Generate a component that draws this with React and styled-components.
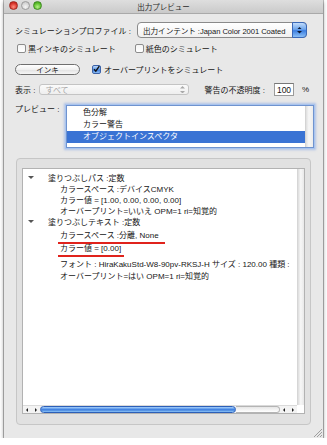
import React from 'react';
import styled, { createGlobalStyle } from 'styled-components';

const GlobalStyle = createGlobalStyle`
  html, body { margin: 0; padding: 0; background: #fff; }
  body {
    font-family: "Liberation Sans", "Noto Sans CJK JP", sans-serif;
    font-size: 8px;
    color: #161616;
  }
`;

const Window = styled.div`
  position: relative;
  margin-left: 4px;
  width: 319px;
  height: 438px;
  background: #e8e8e8;
  box-shadow: 0 0 0 1px rgba(0, 0, 0, 0.25), 0 2px 4px rgba(0, 0, 0, 0.45);
  display: flex;
  flex-direction: column;
`;

const TitleBar = styled.div`
  position: relative;
  height: 13px;
  background: linear-gradient(#dedede, #cacaca);
  border-bottom: 1px solid #a9a9a9;
  display: flex;
  align-items: center;
  justify-content: center;
`;

const Lights = styled.div`
  position: absolute;
  left: 5px;
  top: 1px;
  display: flex;
  gap: 3px;
`;

const Light = styled.span`
  width: 9px;
  height: 9px;
  border-radius: 50%;
  border: 1px solid ${({ c }) => (c === 'red' ? '#a12a22' : c === 'green' ? '#3f8a22' : '#9c9c9c')};
  box-sizing: border-box;
  background: ${({ c }) =>
    c === 'red'
      ? 'radial-gradient(circle at 50% 70%, #ff8f80, #d8342a 60%, #b81d14)'
      : c === 'green'
      ? 'radial-gradient(circle at 50% 70%, #b8f08a, #5cbf2c 60%, #3d951b)'
      : 'radial-gradient(circle at 50% 70%, #f4f4f4, #d0d0d0 70%, #b8b8b8)'};
`;

const Title = styled.div`
  font-size: 7.5px;
  color: #2a2a2a;
`;

const Body = styled.div`
  flex: 1;
  display: flex;
  flex-direction: column;
  padding: 8px 9px 13px 11px;
`;

const Row = styled.div`
  display: flex;
  align-items: center;
  height: ${({ h }) => h || 10}px;
  margin-top: ${({ mt }) => mt || 0}px;
  padding-right: ${({ pr }) => pr || 0}px;
`;

const Label = styled.span`
  white-space: nowrap;
  margin-left: ${({ ml }) => ml || 0}px;
`;

const Popup = styled.div`
  display: flex;
  align-items: center;
  margin-left: auto;
  width: 170px;
  height: 16px;
  box-sizing: border-box;
  border: 1px solid #8a8a8a;
  border-radius: 4px;
  background: linear-gradient(#ffffff, #f1f1f1);
  padding-left: 5px;
`;

const PopupText = styled.span`
  flex: 1;
  white-space: nowrap;
  font-size: 7.6px;
  letter-spacing: -0.05px;
`;

const Stepper = styled.div`
  width: 15px;
  height: 16px;
  margin-right: -1px;
  border-radius: 0 4px 4px 0;
  border: 1px solid #3a68b8;
  box-sizing: border-box;
  background: linear-gradient(#c2dcfb, #6fa6ec 45%, #3d7fe0 55%, #8cc0f6);
  display: flex;
  align-items: center;
  justify-content: center;
`;

const Box = styled.span`
  display: inline-flex;
  align-items: center;
  justify-content: center;
  width: 9px;
  height: 9px;
  box-sizing: border-box;
  margin-left: ${({ ml }) => ml || 0}px;
  margin-right: 2px;
  border: 1px solid ${({ on }) => (on ? '#3b62a8' : '#8c8c8c')};
  border-radius: 2px;
  background: ${({ on }) =>
    on ? 'linear-gradient(#bcd8fa, #5c98e6 50%, #3a79dc 55%, #8fc0f5)' : 'linear-gradient(#f4f4f4, #ffffff)'};
`;

const PillButton = styled.div`
  width: 65px;
  height: 11px;
  box-sizing: border-box;
  border: 1px solid #6f6f6f;
  border-radius: 6px;
  background: linear-gradient(#ffffff, #f0f0f0 50%, #e2e2e2 55%, #f6f6f6);
  display: flex;
  align-items: center;
  justify-content: center;
  font-size: 7.5px;
  margin-right: 12px;
`;

const DimPopup = styled.div`
  display: flex;
  align-items: center;
  justify-content: space-between;
  width: 150px;
  height: 11px;
  box-sizing: border-box;
  margin-left: 4px;
  margin-right: 15px;
  border: 1px solid #c4c4c4;
  border-radius: 3px;
  background: linear-gradient(#fbfbfb, #eeeeee);
  padding: 0 3px 0 5px;
  color: #a3a3a3;
`;

const NumberField = styled.div`
  width: 20px;
  height: 13px;
  box-sizing: border-box;
  margin-left: 9px;
  margin-right: 8px;
  border: 1px solid #9a9a9a;
  border-top-color: #777;
  background: #fff;
  display: flex;
  align-items: center;
  padding-left: 2px;
  font-size: 8.5px;
`;

const PreviewRow = styled.div`
  display: flex;
  margin-top: 9px;
  height: 43px;
`;

const PreviewLabel = styled.span`
  line-height: 10px;
  white-space: nowrap;
  width: 51px;
`;

const ListBox = styled.div`
  width: 248px;
  height: 43px;
  box-sizing: border-box;
  border: 1px solid #6f93cf;
  box-shadow: 0 0 0 1px #a9c4ee, 0 0 2px 2px rgba(120, 160, 230, 0.5);
  background: #fff;
  display: flex;
`;

const ListItems = styled.div`
  flex: 1;
  padding-top: 1px;
`;

const ListItem = styled.div`
  height: 12px;
  line-height: 12px;
  padding-left: 16px;
  color: ${({ sel }) => (sel ? '#fff' : '#161616')};
  background: ${({ sel }) => (sel ? '#3a73d4' : 'transparent')};
`;

const VTrack = styled.div`
  width: 7px;
  background: linear-gradient(90deg, #dedede, #f6f6f6 40%, #ececec);
  border-left: 1px solid #d4d4d4;
`;

const Group = styled.div`
  margin-top: 10px;
  margin-left: 1px;
  width: 295px;
  height: 267px;
  box-sizing: border-box;
  border: 1px solid #c6c6c6;
  border-radius: 4px;
  background: #e1e1e1;
  padding: 9px 6px 10px 5px;
  display: flex;
`;

const Outline = styled.div`
  flex: 1;
  display: grid;
  grid-template-columns: 1fr 7px;
  grid-template-rows: 1fr 8px;
  border: 1px solid #b2b2b2;
  background: #fff;
`;

const OutlineRows = styled.div`
  padding-top: 3px;
  overflow: hidden;
`;

const OutlineRow = styled.div`
  display: flex;
  align-items: center;
  height: ${({ h }) => h || 11}px;
  margin-top: ${({ mt }) => mt || 0}px;
  padding-left: ${({ level }) => (level ? 37 : 5)}px;
  white-space: nowrap;
`;

const Disclosure = styled.span`
  width: 20px;
  display: inline-flex;
  align-items: center;
`;

const Marked = styled.span`
  margin-left: -2px;
  padding: 0 ${({ extra }) => extra || 2}px 1px 2px;
  line-height: 10px;
  border-bottom: 2px solid #e0231c;
`;

const VScroll = styled.div`
  background: linear-gradient(90deg, #dcdcdc, #f7f7f7 45%, #e8e8e8);
  border-left: 1px solid #d6d6d6;
`;

const HScroll = styled.div`
  display: flex;
  align-items: center;
  background: #f3f3f3;
  border-top: 1px solid #dadada;
`;

const Arrows = styled.div`
  width: ${({ w }) => w}px;
  display: flex;
  align-items: center;
  justify-content: space-around;
  height: 100%;
`;

const Thumb = styled.div`
  width: 196px;
  height: 7px;
  box-sizing: border-box;
  border: 1px solid #2c5fb8;
  border-radius: 4px;
  background: linear-gradient(#a8d0fa, #5896ea 40%, #3b7bdc 55%, #8ec6f7);
`;

const Track = styled.div`
  width: 44px;
  height: 7px;
  box-sizing: border-box;
  border: 1px solid #b4b4b4;
  border-left: none;
  border-radius: 0 4px 4px 0;
  background: linear-gradient(#e6e6e6, #ffffff);
`;

const Corner = styled.div`
  background: #fff;
`;

const Grip = styled.svg`
  position: absolute;
  right: 1px;
  bottom: 1px;
`;

const Tri = ({ dir, color = '#222', size = 3 }) => {
  const pts =
    dir === 'left'
      ? `${size},0 ${size},${size * 2} 0,${size}`
      : dir === 'right'
      ? `0,0 0,${size * 2} ${size},${size}`
      : dir === 'up'
      ? `0,${size} ${size * 2},${size} ${size},0`
      : `0,0 ${size * 2},0 ${size},${size}`;
  const w = dir === 'left' || dir === 'right' ? size : size * 2;
  const h = dir === 'left' || dir === 'right' ? size * 2 : size;
  return (
    <svg width={w} height={h} viewBox={`0 0 ${w} ${h}`}>
      <polygon points={pts} fill={color} />
    </svg>
  );
};

const Stack = styled.div`
  display: flex;
  flex-direction: column;
  gap: 2px;
`;

const UpDown = ({ color }) => (
  <Stack>
    <Tri dir="up" color={color} size={2.5} />
    <Tri dir="down" color={color} size={2.5} />
  </Stack>
);

export default function App() {
  return (
    <>
      <GlobalStyle />
      <Window>
        <TitleBar>
          <Lights>
            <Light c="red" />
            <Light c="grey" />
            <Light c="green" />
          </Lights>
          <Title>出力プレビュー</Title>
        </TitleBar>
        <Body>
          <Row h={16} pr={7}>
            <Label>シミュレーションプロファイル :</Label>
            <Popup>
              <PopupText>出力インテント :Japan Color 2001 Coated</PopupText>
              <Stepper>
                <UpDown color="#0d1a33" />
              </Stepper>
            </Popup>
          </Row>
          <Row h={10} mt={5}>
            <Box ml={2} />
            <Label>黒インキのシミュレート</Label>
            <Box ml={19} />
            <Label>紙色のシミュレート</Label>
          </Row>
          <Row h={12} mt={10}>
            <PillButton>インキ</PillButton>
            <Box on>
              <svg width="8" height="8" viewBox="0 0 8 8">
                <path d="M1.2 4.2 L3.2 6.4 L7.2 0.6" stroke="#111" strokeWidth="1.6" fill="none" />
              </svg>
            </Box>
            <Label ml={1}>オーバープリントをシミュレート</Label>
          </Row>
          <Row h={13} mt={8}>
            <Label>表示 :</Label>
            <DimPopup>
              <span>すべて</span>
              <UpDown color="#a8a8a8" />
            </DimPopup>
            <Label>警告の不透明度 :</Label>
            <NumberField>100</NumberField>
            <Label>%</Label>
          </Row>
          <PreviewRow>
            <PreviewLabel>プレビュー :</PreviewLabel>
            <ListBox>
              <ListItems>
                <ListItem>色分解</ListItem>
                <ListItem>カラー警告</ListItem>
                <ListItem sel>オブジェクトインスペクタ</ListItem>
              </ListItems>
              <VTrack />
            </ListBox>
          </PreviewRow>
          <Group>
            <Outline>
              <OutlineRows>
                <OutlineRow>
                  <Disclosure>
                    <Tri dir="down" color="#555" size={3} />
                  </Disclosure>
                  塗りつぶしパス :定数
                </OutlineRow>
                <OutlineRow level={1}>カラースペース :デバイスCMYK</OutlineRow>
                <OutlineRow level={1}>カラー値 = [1.00, 0.00, 0.00, 0.00]</OutlineRow>
                <OutlineRow level={1}>オーバープリント=いいえ OPM=1 ri=知覚的</OutlineRow>
                <OutlineRow>
                  <Disclosure>
                    <Tri dir="down" color="#555" size={3} />
                  </Disclosure>
                  塗りつぶしテキスト :定数
                </OutlineRow>
                <OutlineRow level={1} h={13} mt={4}>
                  <Marked extra={6}>カラースペース :分離, None</Marked>
                </OutlineRow>
                <OutlineRow level={1} h={13}>
                  <Marked extra={3}>カラー値 = [0.00]</Marked>
                </OutlineRow>
                <OutlineRow level={1} h={12}>
                  フォント : HiraKakuStd-W8-90pv-RKSJ-H サイズ : 120.00 種類 :
                </OutlineRow>
                <OutlineRow level={1} h={12}>オーバープリント=はい OPM=1 ri=知覚的</OutlineRow>
              </OutlineRows>
              <VScroll />
              <HScroll>
                <Arrows w={17}>
                  <Tri dir="left" size={2} />
                  <Tri dir="right" size={2} />
                </Arrows>
                <Thumb />
                <Track />
                <Arrows w={17}>
                  <Tri dir="left" size={2} />
                  <Tri dir="right" size={2} />
                </Arrows>
              </HScroll>
              <Corner />
            </Outline>
          </Group>
        </Body>
        <Grip width="9" height="9" viewBox="0 0 9 9">
          <path d="M1 9 L9 1 M4 9 L9 4 M7 9 L9 7" stroke="#8a8a8a" strokeWidth="0.8" />
        </Grip>
      </Window>
    </>
  );
}
